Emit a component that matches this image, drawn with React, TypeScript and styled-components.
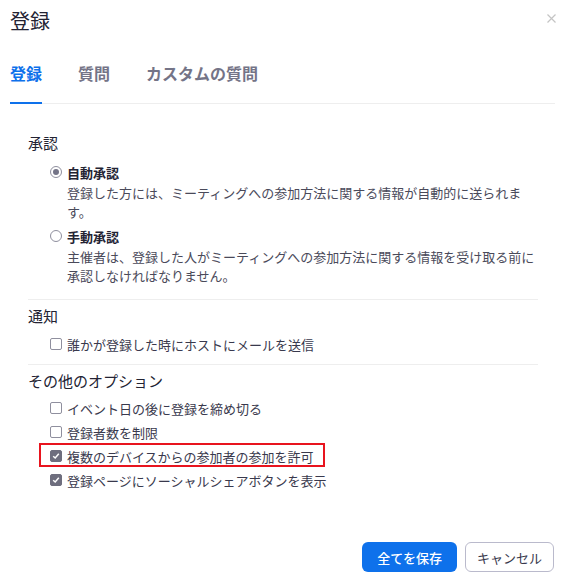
import React from 'react';
import styled, { createGlobalStyle, css } from 'styled-components';

const GlobalStyle = createGlobalStyle`
  html, body {
    margin: 0;
    padding: 0;
    background: #ffffff;
  }
  body {
    font-family: "Noto Sans CJK JP", "Noto Sans", sans-serif;
    color: #232333;
  }
`;

const Dialog = styled.div`
  width: 563px;
  height: 581px;
  display: flex;
  flex-direction: column;
  box-sizing: border-box;
  background: #fff;
`;

const Header = styled.div`
  padding: 10px 7px 0 10px;
`;

const TitleRow = styled.div`
  display: flex;
  justify-content: space-between;
  align-items: flex-start;
`;

const Title = styled.h1`
  margin: 0;
  font-size: 20px;
  line-height: 22px;
  font-weight: 400;
  color: #232333;
`;

const CloseButton = styled.button`
  border: none;
  background: transparent;
  padding: 0;
  margin-top: 4px;
  width: 9px;
  height: 9px;
  display: flex;
  cursor: pointer;
`;

const TabList = styled.div`
  margin-top: 30px;
  margin-right: 1px;
  display: flex;
  gap: 36px;
  border-bottom: 1px solid #eeeeee;
`;

const Tab = styled.div<{ active?: boolean }>`
  font-size: 16px;
  line-height: 22px;
  font-weight: 700;
  padding-bottom: 18px;
  margin-bottom: -1px;
  color: #747487;
  border-bottom: 2px solid transparent;
  ${({ active }) =>
    active &&
    css`
      color: #0e71eb;
      border-bottom-color: #0e71eb;
    `}
`;

const Content = styled.div`
  padding: 23px 0 0 28px;
  width: 510px;
`;

const Section = styled.div<{ last?: boolean; bottom?: number }>`
  padding-top: 6px;
  padding-bottom: ${({ bottom }) => bottom ?? 10}px;
  border-bottom: ${({ last }) => (last ? 'none' : '1px solid #eeeeee')};
`;

const SectionTitle = styled.div`
  font-size: 15px;
  line-height: 20px;
  color: #232333;
`;

const Options = styled.div<{ top?: number; spacing?: number }>`
  margin-top: ${({ top }) => top ?? 8}px;
  padding-left: 22px;
  display: flex;
  flex-direction: column;
  gap: ${({ spacing }) => spacing ?? 4}px;
`;

const OptionRow = styled.label<{ highlighted?: boolean }>`
  position: relative;
  display: flex;
  align-items: center;
  gap: 5px;
  height: 20px;
  font-size: 13px;
  color: #39394d;
  align-self: flex-start;
  ${({ highlighted }) =>
    highlighted &&
    css`
      &::after {
        content: '';
        position: absolute;
        top: -3px;
        bottom: -1px;
        left: -11px;
        right: -11px;
        border: 2px solid #e8141e;
        pointer-events: none;
      }
    `}
`;

const RadioLabel = styled.span`
  font-weight: 700;
  color: #232333;
`;

const Description = styled.div<{ after?: number }>`
  margin: 1px 0 ${({ after }) => after ?? 0}px 17px;
  font-size: 13px;
  line-height: 19px;
  color: #4a4a5a;
`;

const RadioCircle = styled.span<{ checked?: boolean }>`
  width: 12px;
  height: 12px;
  box-sizing: border-box;
  border-radius: 50%;
  border: 1px solid #8f8f9e;
  display: flex;
  align-items: center;
  justify-content: center;
  flex-shrink: 0;
  &::after {
    content: '';
    width: 6px;
    height: 6px;
    border-radius: 50%;
    background: ${({ checked }) => (checked ? '#747487' : 'transparent')};
  }
`;

const Box = styled.span<{ checked?: boolean }>`
  width: 12px;
  height: 12px;
  box-sizing: border-box;
  border-radius: 2px;
  border: 1px solid ${({ checked }) => (checked ? '#6e6e7e' : '#8f8f9e')};
  background: ${({ checked }) => (checked ? '#6e6e7e' : '#fff')};
  display: flex;
  align-items: center;
  justify-content: center;
  flex-shrink: 0;
`;

const Footer = styled.div`
  margin-top: auto;
  display: flex;
  justify-content: flex-end;
  gap: 8px;
  padding: 0 9px 9px 0;
`;

const Button = styled.button<{ primary?: boolean }>`
  height: 30px;
  box-sizing: border-box;
  border-radius: 6px;
  font-family: inherit;
  font-size: 13px;
  cursor: pointer;
  ${({ primary }) =>
    primary
      ? css`
          background: #0e71eb;
          color: #fff;
          border: none;
          padding: 0 15px;
          font-weight: 500;
        `
      : css`
          background: #fff;
          color: #39394d;
          border: 1px solid #babacc;
          padding: 0 11px;
        `}
`;

const Checkbox = ({ checked, label, highlighted }: { checked?: boolean; label: string; highlighted?: boolean }) => (
  <OptionRow highlighted={highlighted}>
    <Box checked={checked}>
      {checked && (
        <svg width="8" height="8" viewBox="0 0 8 8">
          <path d="M1.2 4.2 L3.2 6 L6.8 1.8" stroke="#fff" strokeWidth="1.5" fill="none" />
        </svg>
      )}
    </Box>
    {label}
  </OptionRow>
);

const Radio = ({ checked, label }: { checked?: boolean; label: string }) => (
  <OptionRow>
    <RadioCircle checked={checked} />
    <RadioLabel>{label}</RadioLabel>
  </OptionRow>
);

export default function App() {
  return (
    <>
      <GlobalStyle />
      <Dialog>
        <Header>
          <TitleRow>
            <Title>登録</Title>
            <CloseButton aria-label="閉じる">
              <svg width="9" height="9" viewBox="0 0 9 9">
                <path d="M0.5 0.5 L8.5 8.5 M8.5 0.5 L0.5 8.5" stroke="#c4c4c4" strokeWidth="1.2" />
              </svg>
            </CloseButton>
          </TitleRow>
          <TabList>
            <Tab active>登録</Tab>
            <Tab>質問</Tab>
            <Tab>カスタムの質問</Tab>
          </TabList>
        </Header>

        <Content>
          <Section bottom={14}>
            <SectionTitle>承認</SectionTitle>
            <Options top={9} spacing={0}>
              <Radio checked label="自動承認" />
              <Description after={5}>
                登録した方には、ミーティングへの参加方法に関する情報が自動的に送られます。
              </Description>
              <Radio label="手動承認" />
              <Description>
                主催者は、登録した人がミーティングへの参加方法に関する情報を受け取る前に承認しなければなりません。
              </Description>
            </Options>
          </Section>

          <Section>
            <SectionTitle>通知</SectionTitle>
            <Options>
              <Checkbox label="誰かが登録した時にホストにメールを送信" />
            </Options>
          </Section>

          <Section last>
            <SectionTitle>その他のオプション</SectionTitle>
            <Options top={7}>
              <Checkbox label="イベント日の後に登録を締め切る" />
              <Checkbox label="登録者数を制限" />
              <Checkbox checked highlighted label="複数のデバイスからの参加者の参加を許可" />
              <Checkbox checked label="登録ページにソーシャルシェアボタンを表示" />
            </Options>
          </Section>
        </Content>

        <Footer>
          <Button primary>全てを保存</Button>
          <Button>キャンセル</Button>
        </Footer>
      </Dialog>
    </>
  );
}
